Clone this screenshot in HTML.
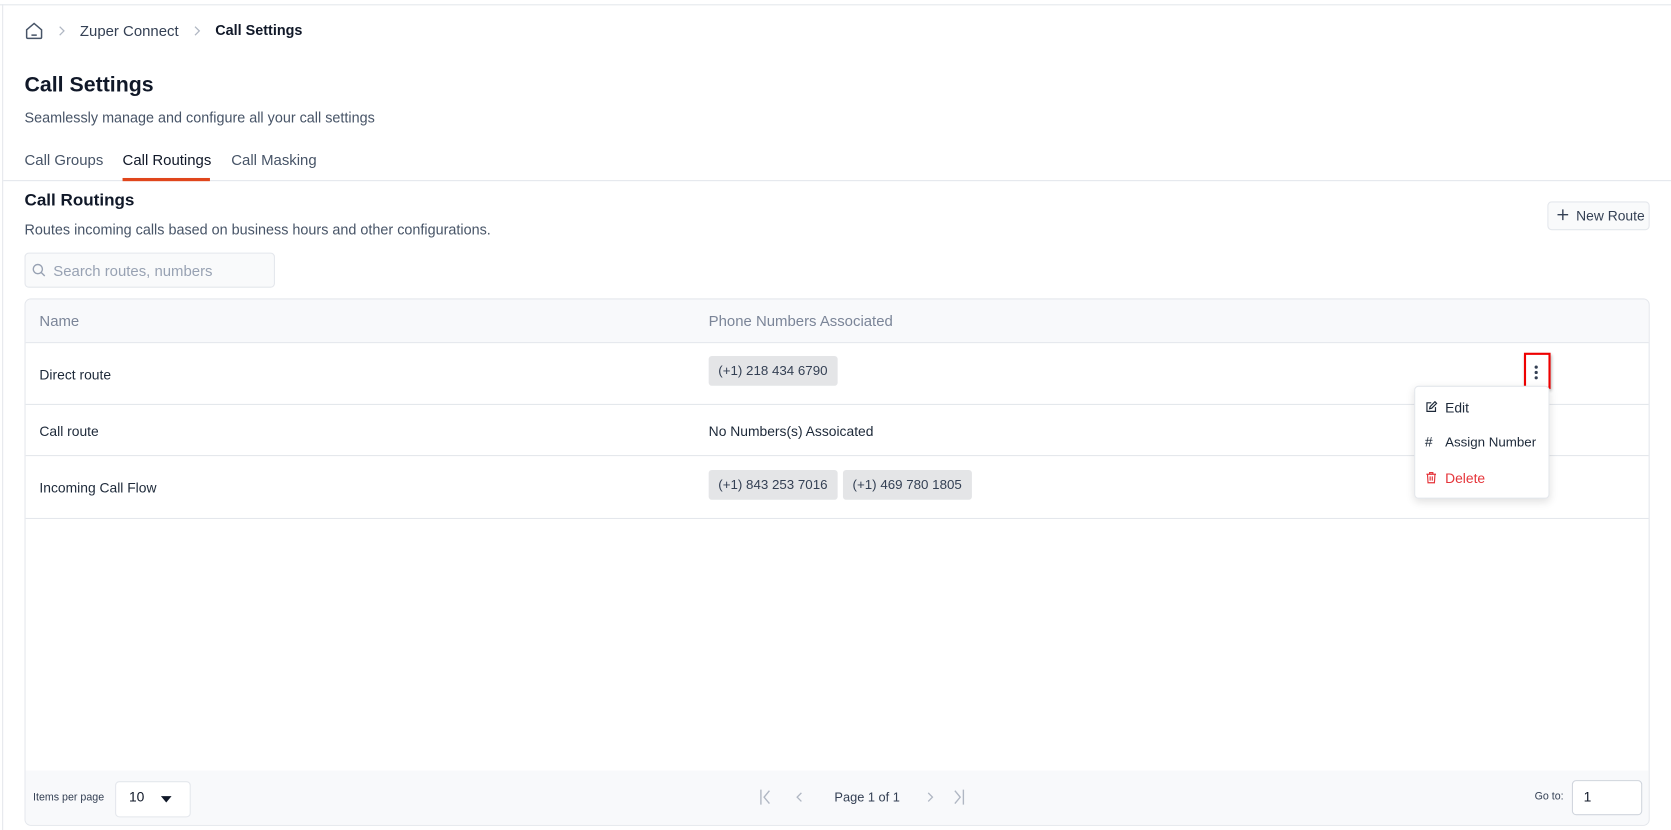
<!DOCTYPE html>
<html><head><meta charset="utf-8"><style>
html,body{margin:0;padding:0;width:1671px;height:830px;overflow:hidden;background:#fff}
#w{position:absolute;left:0;top:0;width:1568px;height:779px;transform:scale(1.06569);transform-origin:0 0;font-family:"Liberation Sans",sans-serif;color:#1d2939}
.a{position:absolute;white-space:nowrap}
.chip{position:absolute;height:28px;line-height:28px;background:#e4e5e7;border-radius:3px;padding:0 9px;font-size:12.5px;color:#344054}
.hl{position:absolute;left:0;width:1524px;height:1px;background:#e4e7ec}
</style></head><body><div id="w">
<div class="a" style="left:0;top:4px;width:1568px;height:1px;background:#e4e7ec"></div>
<div class="a" style="left:2px;top:4px;width:1px;height:775px;background:#e4e7ec"></div>
<svg class="a" style="left:23px;top:20px" width="18" height="18" viewBox="0 0 18 18" fill="none" stroke="#475467" stroke-width="1.4"><path d="M2 8 L9 2 L16 8 V15 a1 1 0 0 1-1 1 H3 a1 1 0 0 1-1-1 Z"/><path d="M6.5 13 H11.5"/></svg>
<svg class="a" style="left:54px;top:24px" width="8" height="10" viewBox="0 0 8 10" fill="none" stroke="#b0b7c3" stroke-width="1.2"><path d="M2 1 L6 5 L2 9"/></svg>
<div class="a" style="left:75px;top:21px;font-size:14px;color:#344054">Zuper Connect</div>
<svg class="a" style="left:181px;top:24px" width="8" height="10" viewBox="0 0 8 10" fill="none" stroke="#b0b7c3" stroke-width="1.2"><path d="M2 1 L6 5 L2 9"/></svg>
<div class="a" style="left:202px;top:21px;font-size:13.5px;font-weight:bold;color:#101828">Call Settings</div>
<div class="a" style="left:23px;top:69px;font-size:20px;font-weight:bold;color:#101828">Call Settings</div>
<div class="a" style="left:23px;top:103px;font-size:13.5px;color:#475467">Seamlessly manage and configure all your call settings</div>
<div class="a" style="left:23px;top:142px;font-size:14px;color:#475467">Call Groups</div>
<div class="a" style="left:115px;top:142px;font-size:14px;color:#101828">Call Routings</div>
<div class="a" style="left:217px;top:142px;font-size:14px;color:#475467">Call Masking</div>
<div class="a" style="left:3px;top:169px;width:1565px;height:1px;background:#e4e7ec"></div>
<div class="a" style="left:115px;top:167px;width:82px;height:3px;background:#e0461c"></div>
<div class="a" style="left:23px;top:180px;font-size:16px;font-weight:bold;color:#101828">Call Routings</div>
<div class="a" style="left:23px;top:208px;font-size:13.5px;color:#475467">Routes incoming calls based on business hours and other configurations.</div>
<div class="a" style="left:23px;top:237px;width:233px;height:31px;background:#f9fafb;border:1px solid #e4e7ec;border-radius:4px"></div>
<svg class="a" style="left:30px;top:247px" width="13" height="13" viewBox="0 0 13 13" fill="none" stroke="#98a2b3" stroke-width="1.3"><circle cx="5.5" cy="5.5" r="4.3"/><path d="M8.7 8.7 L12 12"/></svg>
<div class="a" style="left:50px;top:246px;font-size:14px;color:#98a2b3">Search routes, numbers</div>
<div class="a" style="left:1452px;top:189px;width:94px;height:25px;background:#f9fafb;border:1px solid #e4e7ec;border-radius:4px"></div>
<svg class="a" style="left:1461px;top:196px" width="11" height="11" viewBox="0 0 11 11" stroke="#344054" stroke-width="1.3"><path d="M5.5 0.5 V10.5 M0.5 5.5 H10.5"/></svg>
<div class="a" style="left:1479px;top:195px;font-size:13px;color:#344054">New Route</div>
<div class="a" style="left:23px;top:280px;width:1523px;height:493px;border:1px solid #e4e7ec;border-radius:6px;overflow:hidden">
 <div class="a" style="left:0;top:0;width:1524px;height:40px;background:#f8f9fb"></div>
 <div class="hl" style="top:40px"></div>
 <div class="a" style="left:13px;top:12px;font-size:14px;color:#7b8598">Name</div>
 <div class="a" style="left:641px;top:12px;font-size:14px;color:#7b8598">Phone Numbers Associated</div>
 <div class="a" style="left:13px;top:63px;font-size:13px;color:#1d2939">Direct route</div>
 <div class="chip" style="left:641px;top:53px">(+1) 218 434 6790</div>
 <div class="hl" style="top:98px"></div>
 <div class="a" style="left:13px;top:116px;font-size:13px;color:#1d2939">Call route</div>
 <div class="a" style="left:641px;top:116px;font-size:13px;color:#1d2939">No Numbers(s) Assoicated</div>
 <div class="hl" style="top:146px"></div>
 <div class="a" style="left:13px;top:169px;font-size:13px;color:#1d2939">Incoming Call Flow</div>
 <div class="chip" style="left:641px;top:160px">(+1) 843 253 7016</div>
 <div class="chip" style="left:767px;top:160px">(+1) 469 780 1805</div>
 <div class="hl" style="top:205px"></div>
 <div class="a" style="left:0;top:442px;width:1524px;height:52px;background:#f8f9fb"></div>
 <div class="a" style="left:7px;top:462px;font-size:10px;color:#344054">Items per page</div>
 <div class="a" style="left:84px;top:452px;width:69px;height:32px;background:#fff;border:1px solid #e4e7ec;border-radius:4px"></div>
 <div class="a" style="left:97px;top:459px;font-size:13px;color:#101828">10</div>
 <div class="a" style="left:127px;top:466px;width:0;height:0;border-left:5px solid transparent;border-right:5px solid transparent;border-top:6px solid #101828"></div>
 <svg class="a" style="left:688px;top:459px" width="16" height="16" viewBox="0 0 16 16" fill="none" stroke="#b0b7c3" stroke-width="1.3"><path d="M2 1 V15 M10 2 L5 8 L10 14"/></svg>
 <svg class="a" style="left:722px;top:462px" width="8" height="10" viewBox="0 0 8 10" fill="none" stroke="#b0b7c3" stroke-width="1.2"><path d="M6 1 L2 5 L6 9"/></svg>
 <div class="a" style="left:759px;top:460px;font-size:12px;color:#344054">Page 1 of 1</div>
 <svg class="a" style="left:845px;top:462px" width="8" height="10" viewBox="0 0 8 10" fill="none" stroke="#b0b7c3" stroke-width="1.2"><path d="M2 1 L6 5 L2 9"/></svg>
 <svg class="a" style="left:866px;top:459px" width="16" height="16" viewBox="0 0 16 16" fill="none" stroke="#b0b7c3" stroke-width="1.3"><path d="M14 1 V15 M6 2 L11 8 L6 14"/></svg>
 <div class="a" style="left:1416px;top:461px;font-size:10px;color:#344054">Go to:</div>
 <div class="a" style="left:1451px;top:451px;width:64px;height:31px;background:#fff;border:1px solid #d0d5dd;border-radius:4px"></div>
 <div class="a" style="left:1462px;top:459px;font-size:13px;color:#101828">1</div>
</div>
<div class="a" style="left:1430px;top:331px;width:21px;height:30px;border:2px solid #e00;box-shadow:1px 2px 3px rgba(0,0,0,.3)"></div>
<div class="a" style="left:1440px;top:343px;width:3px;height:3px;border-radius:50%;background:#344054;box-shadow:0 5px 0 #344054,0 10px 0 #344054"></div>
<div class="a" style="left:1327px;top:362px;width:125px;height:104px;background:#fff;border:1px solid #e4e7ec;border-radius:4px;box-shadow:0 3px 8px rgba(0,0,0,.12)"></div>
<svg class="a" style="left:1337px;top:376px" width="12" height="12" viewBox="0 0 12 12" fill="none" stroke="#1d2939" stroke-width="1.1"><path d="M6 2 H2 V10 H10 V6"/><path d="M4.5 7.5 L5 5.5 L9.5 1 L11 2.5 L6.5 7 Z"/></svg>
<div class="a" style="left:1356px;top:375px;font-size:13px;color:#1d2939">Edit</div>
<div class="a" style="left:1337px;top:407px;font-size:13px;color:#1d2939">#</div>
<div class="a" style="left:1356px;top:408px;font-size:12.5px;color:#1d2939">Assign Number</div>
<svg class="a" style="left:1337px;top:442px" width="12" height="12" viewBox="0 0 12 12" fill="none" stroke="#e5343a" stroke-width="1.1"><path d="M1.5 3 H10.5 M4.5 3 V1.5 H7.5 V3 M2.5 3 L3 11 H9 L9.5 3 M5 5 V9 M7 5 V9"/></svg>
<div class="a" style="left:1356px;top:441px;font-size:13px;color:#e5343a">Delete</div>
</div></body></html>
